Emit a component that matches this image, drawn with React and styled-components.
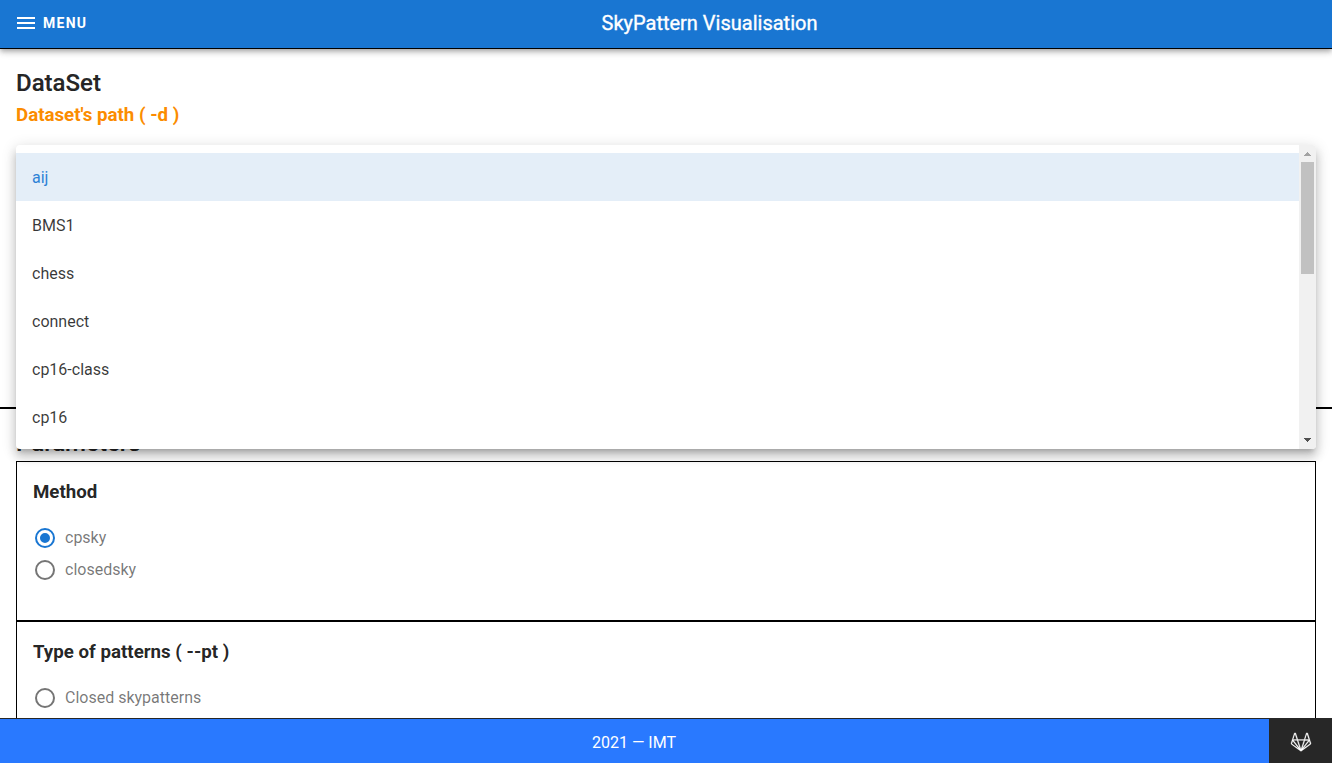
import React from "react";
import styled, { createGlobalStyle } from "styled-components";

const GlobalStyle = createGlobalStyle`
  *, *::before, *::after { box-sizing: border-box; }
  html, body { margin: 0; overflow: hidden; }
  body {
    font-family: Roboto, sans-serif;
    font-size: 16px;
    line-height: 24px;
    color: rgba(0, 0, 0, 0.87);
    background: #fff;
  }
`;

const Page = styled.div`
  display: flex;
  flex-direction: column;
  height: 763px;
  overflow: hidden;
`;

const AppBar = styled.header`
  display: flex;
  align-items: center;
  flex: none;
  height: 49px;
  padding: 0 16px;
  color: #fff;
  background: #1976d2;
  border-bottom: 1px solid #000;
  z-index: 5;
  box-shadow: 0 2px 4px -1px rgba(0, 0, 0, 0.2), 0 4px 5px rgba(0, 0, 0, 0.14),
    0 1px 10px rgba(0, 0, 0, 0.12);
`;

const MenuButton = styled.button`
  display: flex;
  align-items: center;
  gap: 5px;
  width: 89px;
  margin: 0 0 2px -2px;
  padding: 0;
  border: 0;
  background: none;
  color: inherit;
  font: 700 14px/24px Roboto, sans-serif;
  letter-spacing: 1.25px;
`;

const Title = styled.div`
  flex: 1;
  text-align: center;
  font-size: 20px;
  line-height: 30px;
  margin-bottom: 2px;
  -webkit-text-stroke: 0.35px currentColor;
`;

const Icon = styled.svg`
  display: block;
  flex: none;
  width: 24px;
  height: 24px;
  fill: currentColor;
`;

const Main = styled.main`
  flex: 1;
  min-height: 0;
  overflow: hidden;
`;

const DatasetSection = styled.section`
  position: relative;
  height: 360px;
  padding: 16px 16px 0;
  border-bottom: 2px solid #000;
`;

const SectionTitle = styled.h2`
  margin: 0;
  font-size: 24px;
  line-height: 36px;
  font-weight: 500;
  -webkit-text-stroke: 0.2px currentColor;
`;

const FieldTitle = styled.h3`
  margin: 0;
  font-size: 18.72px;
  line-height: 28px;
  font-weight: 700;
  color: #fb8c00;
`;

const Dropdown = styled.div`
  position: absolute;
  z-index: 3;
  top: 96px;
  left: 16px;
  right: 16px;
  display: flex;
  height: 304px;
  overflow: hidden;
  border-radius: 4px;
  background: #fff;
  box-shadow: 0 5px 5px -3px rgba(0, 0, 0, 0.2), 0 8px 10px 1px rgba(0, 0, 0, 0.14),
    0 3px 14px 2px rgba(0, 0, 0, 0.12);
`;

const Options = styled.div`
  flex: 1;
  padding: 8px 0;
`;

const Option = styled.div`
  display: flex;
  align-items: center;
  height: 48px;
  padding: 2px 16px 0;
  color: ${(p) => (p.$selected ? "#2d82d6" : "rgba(0, 0, 0, 0.78)")};
  background: ${(p) => (p.$selected ? "#e4eef8" : "transparent")};
`;

const Scrollbar = styled.div`
  display: flex;
  flex-direction: column;
  align-items: center;
  width: 17px;
  background: #f1f1f1;
`;

const Arrow = styled.svg`
  display: block;
  flex: none;
  width: 17px;
  height: 17px;
  fill: ${(p) => p.$color};
`;

const Thumb = styled.div`
  width: 13px;
  height: 112px;
  margin-bottom: auto;
  background: #c1c1c1;
`;

const ParamsSection = styled.section`
  padding: 16px 16px 0;
`;

const ParamCard = styled.div`
  height: 160px;
  padding: 16px;
  border: 1px solid #000;
`;

const ParamTitle = styled.h3`
  margin: 0 0 20px;
  font-size: 18.72px;
  line-height: 28px;
  font-weight: 700;
`;

const Radio = styled.div`
  display: flex;
  align-items: center;
  gap: 8px;
  height: 24px;
  margin-bottom: 8px;

  svg { color: ${(p) => (p.$checked ? "#1976d2" : "#757575")}; }
`;

const RadioLabel = styled.span`
  color: rgba(0, 0, 0, 0.54);
`;

const Footer = styled.footer`
  display: flex;
  flex: none;
  height: 45px;
  padding-top: 1px;
  color: #fff;
  background: #272727;
  z-index: 5;
`;

const Credit = styled.div`
  display: flex;
  align-items: center;
  justify-content: center;
  width: 1269px;
  padding: 4px 1px 0 0;
  background: #2979ff;
`;

const RepoLink = styled.div`
  display: flex;
  flex: 1;
  align-items: center;
  justify-content: center;
  padding-top: 2px;
`;

const datasets = ["aij", "BMS1", "chess", "connect", "cp16-class", "cp16"];

const RING =
  "M12,20A8,8 0 0,1 4,12A8,8 0 0,1 12,4A8,8 0 0,1 20,12A8,8 0 0,1 12,20M12,2A10,10 0 0,0 2,12A10,10 0 0,0 12,22A10,10 0 0,0 22,12A10,10 0 0,0 12,2Z";
const DOT = "M12,7A5,5 0 0,0 7,12A5,5 0 0,0 12,17A5,5 0 0,0 17,12A5,5 0 0,0 12,7Z";
const GITLAB =
  "M21.94 13.11L20.89 9.89C20.89 9.86 20.88 9.83 20.87 9.8L18.76 3.32C18.65 3 18.33 2.75 17.96 2.75C17.6 2.75 17.28 3 17.17 3.33L15.17 9.5H8.84L6.83 3.33C6.72 3 6.4 2.75 6.04 2.75H6.04C5.67 2.75 5.35 3 5.24 3.33L3.13 9.82C3.13 9.82 3.13 9.83 3.13 9.83L2.06 13.11C1.9 13.61 2.07 14.15 2.5 14.45L11.72 21.16C11.89 21.28 12.11 21.28 12.28 21.15L21.5 14.45C21.93 14.15 22.1 13.61 21.94 13.11M8.15 10.45L10.72 18.36L4.55 10.45M13.28 18.37L15.75 10.78L15.85 10.45H19.46L13.87 17.61M17.97 3.94L19.78 9.5H16.16M14.86 10.45L13.07 15.96L12 19.24L9.14 10.45M6.03 3.94L7.84 9.5H4.23M3.05 13.69C2.96 13.62 2.92 13.5 2.96 13.4L3.75 10.97L9.57 18.4M20.95 13.69L14.44 18.4L14.46 18.37L20.25 10.97L21.04 13.4C21.08 13.5 21.04 13.62 20.95 13.69";

function RadioItem({ checked, children }) {
  return (
    <Radio $checked={checked}>
      <Icon viewBox="0 0 24 24">
        <path d={checked ? RING + DOT : RING} />
      </Icon>
      <RadioLabel>{children}</RadioLabel>
    </Radio>
  );
}

export default function App() {
  return (
    <Page>
      <GlobalStyle />
      <AppBar>
        <MenuButton>
          <Icon viewBox="0 0 24 24">
            <path d="M3,6H21V8H3V6M3,11H21V13H3V11M3,16H21V18H3V16Z" />
          </Icon>
          MENU
        </MenuButton>
        <Title>SkyPattern Visualisation</Title>
      </AppBar>
      <Main>
        <DatasetSection>
          <SectionTitle>DataSet</SectionTitle>
          <FieldTitle>Dataset's path ( -d )</FieldTitle>
          <Dropdown>
            <Options>
              {datasets.map((name, i) => (
                <Option key={name} $selected={i === 0}>
                  {name}
                </Option>
              ))}
            </Options>
            <Scrollbar>
              <Arrow $color="#a3a3a3" viewBox="0 0 17 17" shapeRendering="crispEdges">
                <path d="M5 11H12V10H11V9H10V8H9V7H8V8H7V9H6V10H5Z" />
              </Arrow>
              <Thumb />
              <Arrow $color="#505050" viewBox="0 0 17 17" shapeRendering="crispEdges">
                <path d="M5 6H12V7H11V8H10V9H9V10H8V9H7V8H6V7H5Z" />
              </Arrow>
            </Scrollbar>
          </Dropdown>
        </DatasetSection>
        <ParamsSection>
          <SectionTitle>Parameters</SectionTitle>
          <ParamCard>
            <ParamTitle>Method</ParamTitle>
            <RadioItem checked>cpsky</RadioItem>
            <RadioItem>closedsky</RadioItem>
          </ParamCard>
          <ParamCard>
            <ParamTitle>Type of patterns ( --pt )</ParamTitle>
            <RadioItem>Closed skypatterns</RadioItem>
          </ParamCard>
        </ParamsSection>
      </Main>
      <Footer>
        <Credit>2021 — IMT</Credit>
        <RepoLink>
          <Icon viewBox="0 0 24 24">
            <path d={GITLAB} stroke="currentColor" strokeWidth="0.3" />
          </Icon>
        </RepoLink>
      </Footer>
    </Page>
  );
}
